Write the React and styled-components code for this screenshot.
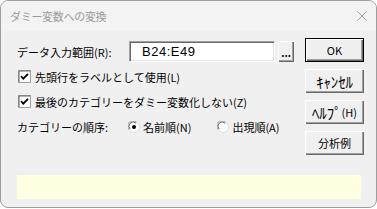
import React from "react";
import styled, { createGlobalStyle } from "styled-components";

const GlobalStyle = createGlobalStyle`
  html, body {
    margin: 0;
    padding: 0;
    background: #ffffff;
  }
  body {
    font-family: "Noto Sans CJK JP", "Noto Sans", sans-serif;
    font-size: 11px;
    color: #000;
  }
`;

const Window = styled.div`
  width: 377px;
  height: 208px;
  box-sizing: border-box;
  border: 1px solid #9d9d9d;
  border-radius: 8px;
  background: #f0f0f0;
  overflow: hidden;
  display: flex;
  flex-direction: column;
`;

const TitleBar = styled.div`
  height: 30px;
  flex: none;
  display: flex;
  align-items: center;
  justify-content: space-between;
  padding: 0 9px 0 9px;
  background: #f3f3f3;
`;

const Title = styled.span`
  color: #9a9a9a;
  font-size: 11px;
  letter-spacing: -0.3px;
`;

const Body = styled.div`
  flex: 1;
  display: flex;
  flex-direction: column;
  padding: 7px 12px 8px 16px;
`;

const Top = styled.div`
  display: flex;
`;

const Left = styled.div`
  flex: 1;
  padding-top: 1px;
  display: flex;
  flex-direction: column;
`;

const Row = styled.div`
  height: 25px;
  display: flex;
  align-items: center;
  white-space: nowrap;
`;

const Label = styled.span`
  width: ${(p) => p.$w}px;
  flex: none;
`;

const Input = styled.div`
  width: 146px;
  height: 21px;
  box-sizing: border-box;
  background: #fff;
  border-top: 1px solid #a0a0a0;
  border-left: 1px solid #a0a0a0;
  border-right: 1px solid #ffffff;
  border-bottom: 1px solid #ffffff;
  box-shadow: inset 1px 1px 0 #696969, inset -1px -1px 0 #e3e3e3;
  display: flex;
  align-items: center;
  padding-left: 12px;
  font-family: "Liberation Sans", Arial, sans-serif;
  font-size: 13px;
  letter-spacing: 0.5px;
`;

const Button = styled.button`
  width: ${(p) => p.$w || 59}px;
  height: ${(p) => p.$h || 24}px;
  margin: 0;
  padding: 0;
  flex: none;
  box-sizing: border-box;
  background: #f0f0f0;
  font-family: "Noto Sans CJK JP", "Noto Sans", sans-serif;
  font-size: 11px;
  color: #000;
  border: ${(p) => (p.$primary ? "1px solid #000" : "none")};
  box-shadow: inset 1px 1px 0 #fff, inset -1px -1px 0 #696969,
    inset -2px -2px 0 #a0a0a0;
  display: flex;
  align-items: center;
  justify-content: center;
`;

const HalfKana = styled.span`
  font-size: 15px;
  line-height: 1;
  letter-spacing: -0.2px;
`;

const DotsButton = styled(Button)`
  margin-left: 3px;
  font-weight: bold;
  font-size: 10px;
  align-items: flex-end;
  padding-bottom: 4px;
  line-height: 1;
`;

const Right = styled.div`
  width: 59px;
  flex: none;
  display: flex;
  flex-direction: column;
  gap: 7px;
`;

const CheckRow = styled(Row)`
  padding-left: 1px;
  gap: 4px;
`;

const Box = styled.span`
  width: 13px;
  height: 13px;
  flex: none;
  display: inline-flex;
`;

const Option = styled.span`
  display: inline-flex;
  align-items: center;
  gap: 3px;
  margin-right: ${(p) => p.$mr || 0}px;
`;

const Hint = styled.div`
  margin-top: 20px;
  margin-right: 3px;
  height: 24px;
  background: #ffffe1;
`;

function Check() {
  return (
    <Box>
      <svg width="13" height="13" viewBox="0 0 13 13">
        <rect x="0.5" y="0.5" width="12" height="12" fill="#fff" stroke="#a0a0a0" />
        <path d="M1 12V1h11" fill="none" stroke="#696969" />
        <path d="M3 6.2l2.3 2.4L10 3.8" fill="none" stroke="#000" strokeWidth="1.8" />
      </svg>
    </Box>
  );
}

function Radio({ on }) {
  return (
    <svg width="12" height="12" viewBox="0 0 12 12">
      <circle cx="6" cy="6" r="5.5" fill="#fff" stroke="#dcdcdc" />
      <path d="M1.2 8.5A5 5 0 0 1 8.5 1.2" fill="none" stroke="#a0a0a0" />
      <path d="M2.2 8A4 4 0 0 1 8 2.2" fill="none" stroke="#696969" />
      {on && <circle cx="6" cy="6" r="2" fill="#000" />}
    </svg>
  );
}

function Close() {
  return (
    <svg width="10" height="10" viewBox="0 0 10 10">
      <path d="M0.5 0.5l9 9M9.5 0.5l-9 9" stroke="#9a9a9a" strokeWidth="1" />
    </svg>
  );
}

export default function App() {
  return (
    <>
      <GlobalStyle />
      <Window>
        <TitleBar>
          <Title>ダミー変数への変換</Title>
          <Close />
        </TitleBar>
        <Body>
          <Top>
            <Left>
              <Row>
                <Label $w={112}>データ入力範囲(R):</Label>
                <Input>B24:E49</Input>
                <DotsButton $w={16} $h={21}>...</DotsButton>
              </Row>
              <CheckRow>
                <Check />
                <span>先頭行をラベルとして使用(L)</span>
              </CheckRow>
              <CheckRow>
                <Check />
                <span>最後のカテゴリーをダミー変数化しない(Z)</span>
              </CheckRow>
              <Row>
                <Label $w={111}>カテゴリーの順序:</Label>
                <Option $mr={26}>
                  <Radio on />
                  <span>名前順(N)</span>
                </Option>
                <Option>
                  <Radio />
                  <span>出現順(A)</span>
                </Option>
              </Row>
            </Left>
            <Right>
              <Button $primary>OK</Button>
              <Button>
                <HalfKana>ｷｬﾝｾﾙ</HalfKana>
              </Button>
              <Button>
                <HalfKana>ﾍﾙﾌﾟ</HalfKana>(H)
              </Button>
              <Button>分析例</Button>
            </Right>
          </Top>
          <Hint />
        </Body>
      </Window>
    </>
  );
}
